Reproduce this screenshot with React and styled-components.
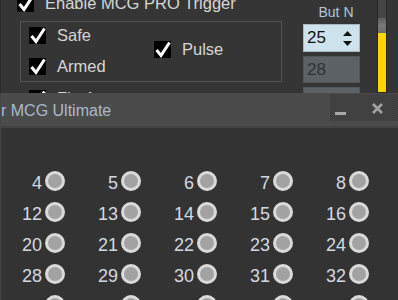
import React from 'react';
import styled, { createGlobalStyle } from 'styled-components';

const GlobalStyle = createGlobalStyle`
  html, body {
    margin: 0;
    padding: 0;
    background: #333333;
  }
  body {
    font-family: "Liberation Sans", Arial, sans-serif;
  }
`;

const narrow = `"Liberation Sans Narrow", "Arial Narrow", "Liberation Sans", sans-serif`;

const Screen = styled.div`
  width: 398px;
  height: 300px;
  overflow: hidden;
  display: flex;
  flex-direction: column;
  background: #343434;
`;

/* ---------- back window ---------- */

const BackWindow = styled.div`
  flex: none;
  height: 93px;
  overflow: hidden;
  display: flex;
  align-items: flex-start;
  box-sizing: border-box;
  border-left: 1px solid #2b2b2b;
  background: #353535;
`;

const LeftColumn = styled.div`
  display: flex;
  flex-direction: column;
  padding-left: 16px;
  margin-top: -5px;
  width: 265px;
`;

const CheckRow = styled.label`
  display: flex;
  align-items: center;
  gap: 11px;
  height: 17px;
  font-size: 16.5px;
  line-height: 17px;
  color: #d6d6d6;
  white-space: nowrap;
  margin: ${({ $m }) => $m || '0'};
`;

const Box = styled.span`
  flex: none;
  position: relative;
  width: 17px;
  height: 17px;
  background: #000;

  svg {
    position: absolute;
    left: 0;
    top: 0;
    overflow: visible;
  }
`;

const Check = ({ children, m }) => (
  <CheckRow $m={m}>
    <Box>
      <svg width="17" height="17" viewBox="0 0 17 17">
        <polyline
          points="2.5,9 7,14.5 15.5,1.5"
          fill="none"
          stroke="#fff"
          strokeWidth="3"
          strokeLinejoin="miter"
        />
      </svg>
    </Box>
    {children}
  </CheckRow>
);

const GroupBox = styled.div`
  margin: 9px 0 0 3px;
  width: 262px;
  height: 61px;
  box-sizing: border-box;
  border: 1px solid #535353;
  padding: 5px 0 0 8px;
  display: grid;
  grid-template-columns: 125px 1fr;
  align-items: start;
`;

const Stack = styled.div`
  display: flex;
  flex-direction: column;
  gap: 14px;
`;

const RightColumn = styled.div`
  margin-left: 21px;
  width: 57px;
  display: flex;
  flex-direction: column;
`;

const FieldLabel = styled.div`
  margin-top: 4px;
  height: 16px;
  padding-left: 9px;
  text-align: center;
  font-size: 14px;
  line-height: 16px;
  color: #b4c6dc;
`;

const Field = styled.div`
  box-sizing: border-box;
  margin-top: 4px;
  height: ${({ $active }) => ($active ? '28px' : '27px')};
  display: flex;
  align-items: center;
  justify-content: space-between;
  padding: 0 7px 0 3px;
  font-family: ${narrow};
  font-size: 17px;
  border: 1px solid ${({ $active }) => ($active ? '#a9b6bd' : '#51565a')};
  background: ${({ $active }) => ($active ? '#cde2ec' : '#5d6266')};
  color: ${({ $active }) => ($active ? '#111' : '#2f3234')};
`;

const Meter = styled.div`
  margin-left: 17px;
  width: 10px;
  height: 93px;
  box-sizing: border-box;
  border: 1px solid #262626;
  border-top: 0;
  background: linear-gradient(
    to bottom,
    #454545 0,
    #454545 18px,
    #5e5e5e 18px,
    #7a7a7a 26px,
    #6a6a6a 33px,
    #ffd500 33px,
    #ffd500 100%
  );
`;

/* ---------- front window ---------- */

const FrontWindow = styled.div`
  flex: 1;
  display: flex;
  flex-direction: column;
  border-left: 1px solid #464646;
  background: #333333;
`;

const TitleBar = styled.div`
  flex: none;
  height: 33px;
  display: flex;
  align-items: flex-start;
  justify-content: space-between;
  background: #4b4b4b;
  border-bottom: 2px solid #434343;
`;

const Title = styled.div`
  margin-top: 8px;
  font-size: 16px;
  line-height: 20px;
  color: #a9bacb;
  white-space: nowrap;
`;

const Controls = styled.div`
  margin-top: 1px;
  height: 27px;
  display: flex;
  background: repeating-conic-gradient(#3b3b3b 0 25%, #464646 0 50%) 0 0 / 2px 2px;
`;

const MinButton = styled.div`
  width: 30px;
  display: flex;
  align-items: flex-end;
  padding: 0 0 6px 5px;
  box-sizing: border-box;

  span {
    width: 11px;
    height: 3px;
    background: #a8a8a8;
  }
`;

const CloseButton = styled.div`
  width: 38px;
  display: flex;
  align-items: flex-start;
  padding: 9px 0 0 12px;
  box-sizing: border-box;
`;

const Grid = styled.div`
  display: grid;
  grid-template-columns: repeat(5, 76px);
  grid-auto-rows: 31px;
  padding-top: 37px;
`;

const Cell = styled.div`
  display: flex;
  align-items: center;
  justify-content: flex-end;
  gap: 3px;
  padding-right: 12px;
`;

const Num = styled.span`
  margin-top: 5px;
  font-family: ${narrow};
  font-size: 18px;
  line-height: 18px;
  color: #d3d9e0;
`;

const Radio = styled.span`
  flex: none;
  width: 20px;
  height: 20px;
  box-sizing: border-box;
  border-radius: 50%;
  border: 3px solid #dadada;
  background: #a2a2a2;
`;

const rows = [4, 12, 20, 28, 36];

export default function App() {
  return (
    <>
      <GlobalStyle />
      <Screen>
        <BackWindow>
          <LeftColumn>
            <Check>Enable MCG PRO Trigger</Check>
            <GroupBox>
              <Stack>
                <Check>Safe</Check>
                <Check>Armed</Check>
              </Stack>
              <Check m="14px 0 0 0">Pulse</Check>
            </GroupBox>
            <Check m="8px 0 0 12px">Fire1</Check>
          </LeftColumn>
          <RightColumn>
            <FieldLabel>But N</FieldLabel>
            <Field $active>
              25
              <svg width="9" height="15" viewBox="0 0 9 15">
                <polygon points="4.5,0 9,5 0,5" fill="#111" />
                <polygon points="0,10 9,10 4.5,15" fill="#111" />
              </svg>
            </Field>
            <Field>28</Field>
            <Field>29</Field>
          </RightColumn>
          <Meter />
        </BackWindow>
        <FrontWindow>
          <TitleBar>
            <Title>r MCG Ultimate</Title>
            <Controls>
              <MinButton>
                <span />
              </MinButton>
              <CloseButton>
                <svg width="11" height="11" viewBox="0 0 11 11">
                  <path d="M1 1L10 10M10 1L1 10" stroke="#a3a3a3" strokeWidth="2.6" />
                </svg>
              </CloseButton>
            </Controls>
          </TitleBar>
          <Grid>
            {rows.map((start) =>
              [0, 1, 2, 3, 4].map((i) => (
                <Cell key={start + i}>
                  <Num>{start + i}</Num>
                  <Radio />
                </Cell>
              ))
            )}
          </Grid>
        </FrontWindow>
      </Screen>
    </>
  );
}
